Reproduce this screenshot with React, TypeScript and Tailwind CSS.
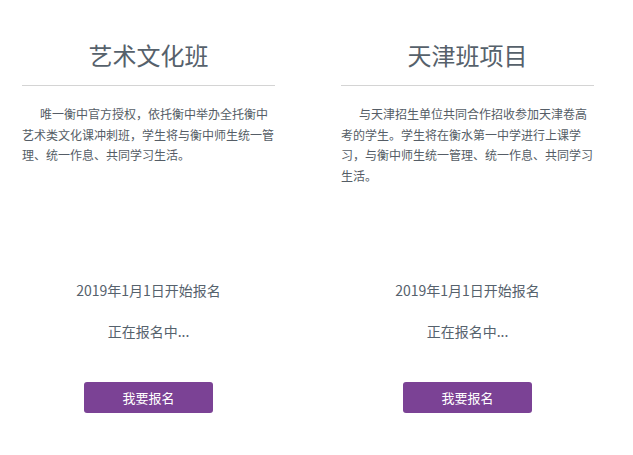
import React from "react";

const programs = [
  {
    title: "艺术文化班",
    desc: "唯一衡中官方授权，依托衡中举办全托衡中艺术类文化课冲刺班，学生将与衡中师生统一管理、统一作息、共同学习生活。",
  },
  {
    title: "天津班项目",
    desc: "与天津招生单位共同合作招收参加天津卷高考的学生。学生将在衡水第一中学进行上课学习，与衡中师生统一管理、统一作息、共同学习生活。",
  },
];

const ProgramCard = ({ title, desc }: { title: string; desc: string }) => {
  return (
    <div className="flex w-[297px] flex-col px-[22px] pt-[37px]">
      <h2 className="text-center text-[24px] font-normal leading-[36px] text-[#56616b]">{title}</h2>
      <div className="mt-[12px] h-px bg-[#d4d4d4]" />
      <p className="mt-[18px] h-[176px] text-[12px] leading-[20.7px] text-[#555d66] indent-[18px]">{desc}</p>
      <p className="text-center text-[14px] leading-[20px] text-[#56626d]">2019年1月1日开始报名</p>
      <p className="mt-[21px] text-center text-[14px] leading-[20px] text-[#56626d]">正在报名中...</p>
      <button className="mx-auto mt-[41px] h-[31px] w-[129px] rounded-[3px] bg-[#7b4295] text-[13px] text-white">我要报名</button>
    </div>
  );
};

export default function App() {
  return (
    <div className="min-h-screen bg-white" style={{ fontFamily: '"Noto Sans CJK SC", "Noto Sans", sans-serif' }}>
      <div className="flex gap-[22px]">
        {programs.map((p, index) => (
          <ProgramCard key={index} title={p.title} desc={p.desc} />
        ))}
      </div>
    </div>
  );
}
